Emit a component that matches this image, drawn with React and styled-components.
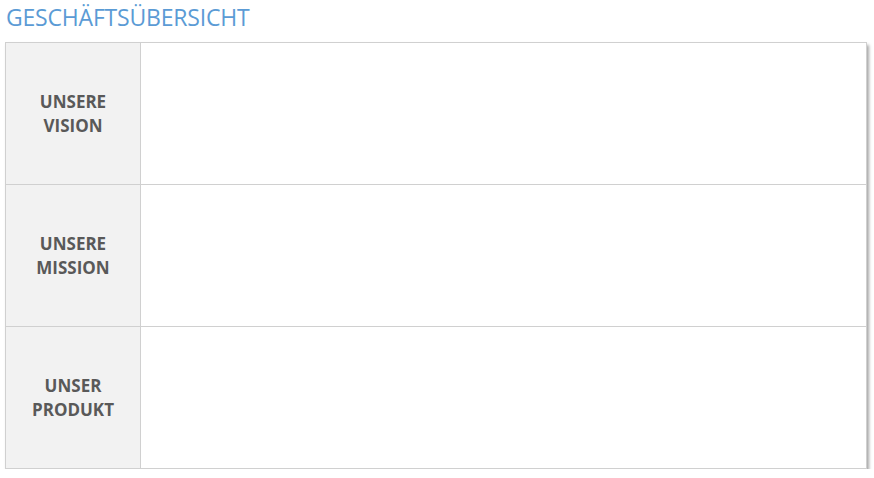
import React from "react"
import styled, { createGlobalStyle } from "styled-components"

const GlobalStyle = createGlobalStyle`
  body {
    margin: 0;
    background: #fff;
    font-family: "Open Sans", "Noto Sans", sans-serif;
  }
`

const Page = styled.div`
  padding: 1px 8px 0 5px;
`

const Title = styled.h1`
  margin: 0 0 8px 1px;
  font-size: 23px;
  font-weight: 400;
  line-height: 33px;
  color: #5b9bd5;
  letter-spacing: -0.2px;
`

const Table = styled.div`
  width: 860px;
  border: 1px solid #d0d0d0;
  box-shadow: 2px 3px 3px rgba(0, 0, 0, 0.35);
  display: grid;
  grid-template-columns: 135px 1fr;
`

const Label = styled.div`
  height: ${(p) => p.$h}px;
  background: #f2f2f2;
  border-right: 1px solid #d0d0d0;
  border-top: ${(p) => (p.$first ? "none" : "1px solid #d0d0d0")};
  display: flex;
  align-items: center;
  justify-content: center;
  text-align: center;
  font-size: 17px;
  font-weight: 700;
  line-height: 24px;
  color: #595959;
  padding-top: 1px;
  box-sizing: border-box;
`

const Cell = styled.div`
  height: ${(p) => p.$h}px;
  background: #fff;
  border-top: ${(p) => (p.$first ? "none" : "1px solid #d0d0d0")};
  box-sizing: border-box;
`

const rows = [
  ["UNSERE", "VISION"],
  ["UNSERE", "MISSION"],
  ["UNSER", "PRODUKT"],
]

const App = () => {
  return (
    <Page>
      <GlobalStyle />
      <Title>GESCHÄFTSÜBERSICHT</Title>
      <Table>
        {rows.map((r, i) => (
          <React.Fragment key={i}>
            <Label $first={i === 0} $h={i === 0 ? 141 : 142}>
              {r[0]}
              <br />
              {r[1]}
            </Label>
            <Cell $first={i === 0} $h={i === 0 ? 141 : 142} />
          </React.Fragment>
        ))}
      </Table>
    </Page>
  )
}

export default App
